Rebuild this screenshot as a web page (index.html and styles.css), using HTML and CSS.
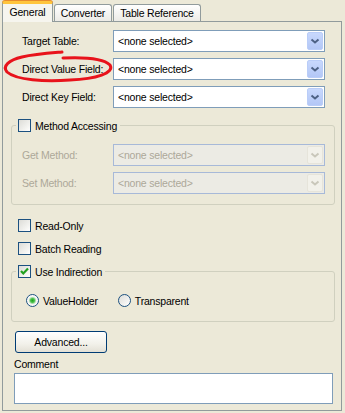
FILE: index.html
```html
<!DOCTYPE html>
<html lang="en">
<head>
    <meta charset="UTF-8">
    <title>Mapping Properties - General</title>
    <link rel="stylesheet" href="styles.css">
</head>
<body>
    <div class="dialog">
        <div class="tabs">
            <div class="tab tab-active">General</div>
            <div class="tab tab-converter">Converter</div>
            <div class="tab tab-reference">Table Reference</div>
        </div>

        <div class="panel">
            <div class="field-row">
                <span class="field-label">Target Table:</span>
                <div class="combo">
                    <span class="combo-text">&lt;none selected&gt;</span>
                    <span class="combo-button"><svg width="14" height="18" viewBox="0 0 14 18"><path d="M3.5 7.5 L7 10.5 L10.5 7.5" fill="none" stroke="#4d6185" stroke-width="2"/></svg></span>
                </div>
            </div>
            <div class="field-row">
                <span class="field-label">Direct Value Field:</span>
                <div class="combo">
                    <span class="combo-text">&lt;none selected&gt;</span>
                    <span class="combo-button"><svg width="14" height="18" viewBox="0 0 14 18"><path d="M3.5 7.5 L7 10.5 L10.5 7.5" fill="none" stroke="#4d6185" stroke-width="2"/></svg></span>
                </div>
            </div>
            <div class="field-row">
                <span class="field-label">Direct Key Field:</span>
                <div class="combo">
                    <span class="combo-text">&lt;none selected&gt;</span>
                    <span class="combo-button"><svg width="14" height="18" viewBox="0 0 14 18"><path d="M3.5 7.5 L7 10.5 L10.5 7.5" fill="none" stroke="#4d6185" stroke-width="2"/></svg></span>
                </div>
            </div>

            <!-- Method Accessing group -->
            <fieldset class="group group-method">
                <legend class="group-legend"><span class="checkbox"></span>Method Accessing</legend>
                <div class="field-row field-row-disabled">
                    <span class="field-label">Get Method:</span>
                    <div class="combo combo-disabled">
                        <span class="combo-text">&lt;none selected&gt;</span>
                        <span class="combo-button"><svg width="14" height="18" viewBox="0 0 14 18"><path d="M3.5 7.5 L7 10.5 L10.5 7.5" fill="none" stroke="#c9c7ba" stroke-width="2"/></svg></span>
                    </div>
                </div>
                <div class="field-row field-row-disabled">
                    <span class="field-label">Set Method:</span>
                    <div class="combo combo-disabled">
                        <span class="combo-text">&lt;none selected&gt;</span>
                        <span class="combo-button"><svg width="14" height="18" viewBox="0 0 14 18"><path d="M3.5 7.5 L7 10.5 L10.5 7.5" fill="none" stroke="#c9c7ba" stroke-width="2"/></svg></span>
                    </div>
                </div>
            </fieldset>

            <div class="check-row check-readonly"><span class="checkbox"></span>Read-Only</div>
            <div class="check-row check-batch"><span class="checkbox"></span>Batch Reading</div>

            <!-- Indirection group -->
            <fieldset class="group group-indirection">
                <legend class="group-legend">
                    <span class="checkbox"><svg width="11" height="11" viewBox="0 0 11 11"><path d="M2 5 L4.3 7.5 L9 2.5" fill="none" stroke="#21a121" stroke-width="2.2"/></svg></span>Use Indirection
                </legend>
                <div class="radio-row">
                    <span class="radio-item"><span class="radio radio-selected"></span>ValueHolder</span>
                    <span class="radio-item"><span class="radio"></span>Transparent</span>
                </div>
            </fieldset>

            <button class="btn-advanced">Advanced...</button>
            <div class="comment-label">Comment</div>
            <div class="comment-box"></div>
        </div>

        <svg class="annotation" width="345" height="413" viewBox="0 0 345 413">
            <path d="M63 58 C85 57, 104 59, 110 65 C115 73, 96 79, 70 80 C45 82, 16 80, 7 72 C2 66, 9 60, 22 57 C35 54, 50 53, 62 52" fill="none" stroke="#e8131b" stroke-width="3" stroke-linecap="round"/>
        </svg>
    </div>
</body>
</html>
```

FILE: styles.css
```css
/* General Styling */
body {
    font-family: 'Liberation Sans', Arial, sans-serif;
    font-size: 10.5px;
    letter-spacing: -0.2px;
    background-color: #ece9d8;
    color: #000;
    margin: 0;
    padding: 0;
}

.dialog {
    position: relative;
    width: 345px;
    height: 413px;
    overflow: hidden;
}

/* Tabs */
.tabs {
    display: flex;
    align-items: flex-end;
    height: 21px;
    padding-left: 2px;
}

.tab {
    box-sizing: border-box;
    height: 17px;
    margin-left: 1px;
    border: 1px solid #919b9c;
    border-bottom: none;
    border-radius: 3px 3px 0 0;
    background: linear-gradient(#ffffff, #ecebe6);
    display: flex;
    align-items: center;
    justify-content: center;
}

.tab-active {
    position: relative;
    z-index: 1;
    width: 51px;
    height: 21px;
    margin-left: 0;
    margin-bottom: -1px;
    border-top: 3px solid #ffc53c;
    box-shadow: 0 -1px 0 #e68b2c;
    background: #f6f5ee;
    padding-bottom: 2px;
}

.tab-converter {
    width: 58px;
}

.tab-reference {
    width: 88px;
}

/* Panel */
.panel {
    box-sizing: border-box;
    width: 340px;
    margin-left: 2px;
    border: 1px solid #919b9c;
    padding: 8px 6px 6px 8px;
    background-color: #ece9d8;
}

/* Label + combo rows */
.field-row {
    display: flex;
    align-items: center;
    height: 22px;
    padding-left: 11px;
    padding-right: 10px;
    margin-bottom: 6px;
}

.field-label {
    flex: 0 0 91px;
    white-space: nowrap;
}

.combo {
    box-sizing: border-box;
    flex: 1;
    height: 22px;
    border: 1px solid #7f9db9;
    background-color: #fff;
    display: flex;
    align-items: center;
    padding: 1px;
}

.combo-text {
    flex: 1;
    padding-left: 3px;
}

.combo-button {
    box-sizing: border-box;
    width: 16px;
    height: 18px;
    border: 1px solid #bacdf8;
    border-radius: 2px;
    background: linear-gradient(#c8d8fd, #b3c7f6);
    display: flex;
    align-items: center;
    justify-content: center;
}

.field-row-disabled {
    color: #aca899;
}

.combo-disabled {
    border-color: #a7b9d8;
    background-color: #ecebe4;
}

.combo-disabled .combo-button {
    border-color: #e6e4da;
    background: #f2f1ea;
}

/* Group boxes */
.group {
    margin: 0;
    border: 1px solid #d0d0bf;
    border-radius: 3px;
    min-width: 0;
}

.group-legend {
    display: flex;
    align-items: center;
    height: 13px;
    padding: 0 3px 0 2px;
    margin-left: -6px;
}

.group .field-row {
    padding-left: 0;
    padding-right: 0;
}

.group .field-row:last-child {
    margin-bottom: 0;
}

.group-method {
    margin-top: 11px;
    padding: 12px 9px 10px 10px;
}

.group-indirection {
    margin-top: 10px;
    padding: 16px 9px 14px 10px;
}

/* Checkboxes */
.checkbox {
    box-sizing: border-box;
    width: 13px;
    height: 13px;
    border: 1px solid #1c5180;
    background: linear-gradient(135deg, #dcdcd7, #f4f4f1 70%, #ffffff);
    margin-right: 4px;
    display: flex;
    align-items: center;
    justify-content: center;
    flex-shrink: 0;
}

.check-row {
    display: flex;
    align-items: center;
    height: 13px;
    padding-left: 7px;
}

.check-readonly {
    margin-top: 14px;
}

.check-batch {
    margin-top: 10px;
}

/* Radio buttons */
.radio-row {
    display: flex;
    align-items: center;
    gap: 20px;
    height: 13px;
    padding-left: 4px;
}

.radio-item {
    display: flex;
    align-items: center;
}

.radio {
    box-sizing: border-box;
    width: 13px;
    height: 13px;
    border: 1px solid #1c5180;
    border-radius: 50%;
    background: linear-gradient(135deg, #dcdcd7, #ffffff);
    margin-right: 4px;
}

.radio-selected {
    background: radial-gradient(circle, #21a121 0, #4bc34b 2px, #a8dca8 3px, #f4f4f1 4px, #ffffff 6px);
}

/* Button */
.btn-advanced {
    box-sizing: border-box;
    display: block;
    width: 92px;
    height: 22px;
    margin: 9px 0 0 4px;
    border: 1px solid #003c74;
    border-radius: 3px;
    background: linear-gradient(#ffffff, #f2f1ea 60%, #e3e0d5);
    font-family: inherit;
    font-size: 10.5px;
    letter-spacing: -0.2px;
    color: #000;
    padding: 0;
}

/* Comment */
.comment-label {
    height: 14px;
    line-height: 14px;
    margin: 4px 0 0 3px;
}

.comment-box {
    box-sizing: border-box;
    height: 31px;
    margin: 2px 2px 0 3px;
    border: 1px solid #7f9db9;
    background-color: #fff;
}

/* Red hand-drawn mark */
.annotation {
    position: absolute;
    left: 0;
    top: 0;
    pointer-events: none;
}
```
